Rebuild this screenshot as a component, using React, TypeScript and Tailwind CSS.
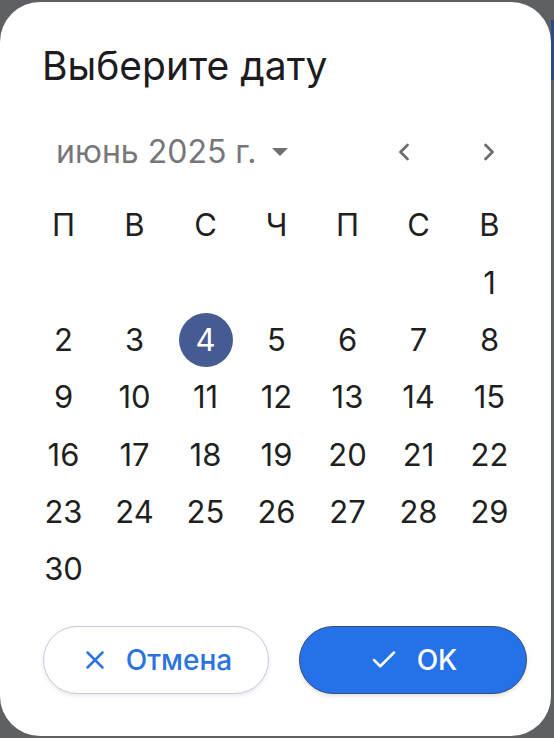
import { Check, ChevronLeft, ChevronRight, X } from "lucide-react";

const weekDays = ["П", "В", "С", "Ч", "П", "С", "В"];

// June 2025 starts on Sunday, so six empty cells lead the month
const days: (number | null)[] = [
    ...Array(6).fill(null),
    ...Array.from({ length: 30 }, (_, i) => i + 1),
];

const selectedDay = 4;

export default function App() {
    return (
        <div className="relative w-[554px] h-[738px] bg-[#5f6064] overflow-hidden pt-[2px] pb-[2px] pr-[3px] font-['Inter',sans-serif]">
            <div className="absolute right-0 top-[20px] w-[3px] h-[60px] bg-[#2b4a8a]" />
            <div className="w-[551px] h-[734px] bg-white rounded-[40px] flex flex-col">
                <div className="h-[125px] pl-[42px] pt-[41px]">
                    <h2 className="text-[39px] leading-[46px] text-[#1d1b20]">Выберите дату</h2>
                </div>

                <div className="h-[50px] flex items-center pl-[56px] pr-[48px]">
                    <button className="flex items-center gap-[14px] text-[32px] text-[#77767b]">
                        <span>июнь 2025 г.</span>
                        <svg width="18" height="10" viewBox="0 0 18 10">
                            <path d="M1 1h16L9 9z" fill="#6f6f73" />
                        </svg>
                    </button>
                    <div className="ml-auto flex items-center gap-[57px] text-[#6f6f73]">
                        <ChevronLeft size={28} strokeWidth={2.4} />
                        <ChevronRight size={28} strokeWidth={2.4} />
                    </div>
                </div>

                <div className="mx-[28px] mt-[20px] w-[497px] grid grid-cols-7 auto-rows-[57.3px] text-[31px] text-[#1f1f22]">
                    {weekDays.map((d, i) => (
                        <div key={`w${i}`} className="flex items-center justify-center">
                            {d}
                        </div>
                    ))}
                    {days.map((d, i) => (
                        <div key={i} className="flex items-center justify-center">
                            {d === selectedDay ? (
                                <span className="w-[54px] h-[54px] rounded-full bg-[#465b92] text-white flex items-center justify-center">
                                    {d}
                                </span>
                            ) : (
                                d
                            )}
                        </div>
                    ))}
                </div>

                <div className="mt-auto mb-[42px] mx-[24px] pl-[19px] flex gap-[30px]">
                    <button className="w-[226px] h-[68px] rounded-full bg-white border border-[#c6c9e3] shadow-[0_2px_4px_rgba(0,0,0,0.08)] flex items-center justify-center gap-[16px] text-[#2a73e0] text-[28px] font-medium">
                        <X size={30} strokeWidth={2} />
                        <span>Отмена</span>
                    </button>
                    <button className="w-[228px] h-[68px] rounded-full bg-[#2571e8] border border-[#3d4f72] shadow-[0_2px_4px_rgba(0,0,0,0.12)] flex items-center justify-center gap-[18px] text-white text-[28px] font-medium">
                        <Check size={30} strokeWidth={2} />
                        <span>OK</span>
                    </button>
                </div>
            </div>
        </div>
    );
}
